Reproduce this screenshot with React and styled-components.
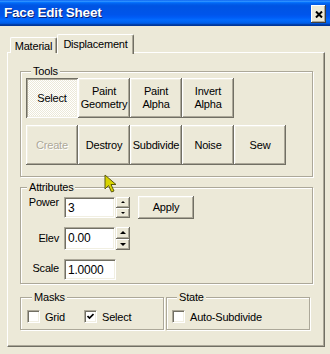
import React from "react";
import styled, { createGlobalStyle } from "styled-components";

const GlobalStyle = createGlobalStyle`
  html, body {
    margin: 0;
    padding: 0;
    background: #ece9d8;
  }
  body {
    font-family: "Liberation Sans", Arial, sans-serif;
    font-size: 11px;
    letter-spacing: -0.2px;
    color: #000;
  }
`;

//  Window frame
const Window = styled.div`
  position: relative;
  width: 330px;
  height: 354px;
  background: #ece9d8;
  display: flex;
  flex-direction: column;
  overflow: hidden;
`;

const TitleBar = styled.div`
  height: 26px;
  flex: none;
  display: flex;
  align-items: flex-start;
  justify-content: space-between;
  padding: 0 4px 0 4px;
  background: linear-gradient(
    to bottom,
    #0058ee 0%,
    #3593ff 4%,
    #288eff 6%,
    #127dff 8%,
    #036ffc 10%,
    #0262ee 14%,
    #0057e5 20%,
    #0054e3 24%,
    #0055eb 56%,
    #005bf5 66%,
    #026afe 76%,
    #0062ef 86%,
    #0052d6 92%,
    #0040ab 94%,
    #003092 100%
  );
`;

const Title = styled.span`
  color: #fff;
  font-weight: bold;
  font-size: 13.5px;
  letter-spacing: -0.2px;
  line-height: 26px;
  text-shadow: 1px 1px 0 #0a1e6e;
`;

const CloseButton = styled.div`
  width: 15px;
  height: 18px;
  margin-top: 5px;
  box-sizing: border-box;
  background: #ece9d8;
  display: flex;
  align-items: center;
  justify-content: center;
  box-shadow: inset -1px -1px #404040, inset 1px 1px #fff,
    inset -2px -2px #aca899;
`;

const Body = styled.div`
  flex: 1;
  display: flex;
  flex-direction: column;
  padding: 7px 5px 7px 7px;
`;

//  Tabs
const TabStrip = styled.div`
  height: 20px;
  display: flex;
  align-items: flex-end;
  padding-left: 3px;
`;

const Tab = styled.div`
  position: relative;
  z-index: ${p => (p.$active ? 1 : 0)};
  width: ${p => p.$width}px;
  height: ${p => (p.$active ? 20 : 16)}px;
  box-sizing: border-box;
  padding-top: ${p => (p.$active ? 3 : 2)}px;
  text-align: center;
  background: #ece9d8;
  border-top: 1px solid #fff;
  border-left: 1px solid #fff;
  border-right: 1px solid #716f64;
  border-radius: 2px 2px 0 0;
  box-shadow: inset -1px 0 #aca899;
  margin-bottom: ${p => (p.$active ? -1 : 0)}px;
`;

const TabPanel = styled.div`
  flex: 1;
  margin-top: -1px;
  display: flex;
  flex-direction: column;
  border: 1px solid;
  border-color: #fff #716f64 #716f64 #fff;
  box-shadow: inset -1px -1px #aca899;
  padding: 12px 11px 0 12px;
`;

//  Group boxes
const GroupBox = styled.fieldset`
  margin: ${p => p.$top || 0}px 0 0 0;
  min-width: 0;
  width: ${p => (p.$width ? `${p.$width}px` : "auto")};
  box-sizing: border-box;
  padding: ${p => p.$pad};
  border: 1px solid #aca899;
  box-shadow: inset 1px 1px 0 #fff, 1px 1px 0 #fff;
`;

const GroupLabel = styled.legend`
  padding: 0 2px;
  margin-left: 5px;
  line-height: 13px;
  background: #ece9d8;
`;

//  Tools buttons
const ButtonRow = styled.div`
  display: flex;
  & + & {
    margin-top: 7px;
  }
`;

const ToolButton = styled.div`
  width: 52px;
  height: 40px;
  box-sizing: border-box;
  display: flex;
  align-items: center;
  justify-content: center;
  text-align: center;
  line-height: 13px;
  color: ${p => (p.$disabled ? "#aca899" : "#000")};
  text-shadow: ${p => (p.$disabled ? "1px 1px 0 #fff" : "none")};
  background: ${p =>
    p.$pressed
      ? "repeating-conic-gradient(#fff 0 25%, #ece9d8 0 50%) 0 0 / 2px 2px"
      : "#ece9d8"};
  box-shadow: ${p =>
    p.$pressed
      ? "inset 1px 1px #716f64, inset -1px -1px #fff, inset 2px 2px #aca899, inset -2px -2px #f1efe2"
      : "inset -1px -1px #716f64, inset 1px 1px #fff, inset -2px -2px #aca899, inset 2px 2px #f1efe2"};
`;

//  Attributes rows
const FieldRow = styled.div`
  display: flex;
  align-items: flex-start;
  height: 22px;
  & + & {
    margin-top: 9px;
  }
`;

const FieldLabel = styled.span`
  width: 36px;
  margin-left: 1px;
  padding-top: ${p => p.$lift}px;
  text-align: right;
`;

const TextBox = styled.div`
  width: ${p => p.$width}px;
  height: ${p => p.$height || 21}px;
  margin-left: 5px;
  margin-top: ${p => p.$offset || 0}px;
  box-sizing: border-box;
  padding: 3px 0 0 3px;
  background: #fff;
  border: 1px solid;
  border-color: #aca899 #fff #fff #aca899;
  box-shadow: inset 1px 1px #716f64, inset -1px -1px #f1efe2;
  font-size: 12px;
`;

const Spinner = styled.div`
  width: 14px;
  height: ${p => p.$height}px;
  margin-left: 1px;
  margin-top: ${p => p.$offset || 0}px;
  display: flex;
  flex-direction: column;
`;

const SpinHalf = styled.div`
  flex: 1;
  display: flex;
  align-items: center;
  justify-content: center;
  background: #ece9d8;
  box-shadow: inset -1px -1px #716f64, inset 1px 1px #fff,
    inset -2px -2px #aca899;
`;

const Arrow = styled.div`
  width: 0;
  height: 0;
  border-left: ${p => (p.$big ? 3 : 2)}px solid transparent;
  border-right: ${p => (p.$big ? 3 : 2)}px solid transparent;
  ${p => (p.$down ? "border-top" : "border-bottom")}: ${p =>
      p.$big ? 3 : 2}px solid #000;
`;

const ApplyButton = styled(ToolButton)`
  width: 56px;
  height: 23px;
  margin-left: 8px;
`;

//  Masks / State
const BottomRow = styled.div`
  display: flex;
  gap: 2px;
  margin-top: 7px;
`;

const CheckRow = styled.div`
  display: flex;
  align-items: center;
  height: 13px;
`;

const CheckItem = styled.div`
  display: flex;
  align-items: center;
  gap: 5px;
  width: ${p => (p.$width ? `${p.$width}px` : "auto")};
`;

const CheckBox = styled.div`
  width: 13px;
  height: 13px;
  box-sizing: border-box;
  display: flex;
  align-items: center;
  justify-content: center;
  background: #fff;
  border: 1px solid;
  border-color: #aca899 #fff #fff #aca899;
  box-shadow: inset 1px 1px #716f64, inset -1px -1px #f1efe2;
`;

const Cursor = styled.svg`
  position: absolute;
  left: 104px;
  top: 174px;
`;

const Spin = ({ height, offset, big }) => (
  <Spinner $height={height} $offset={offset}>
    <SpinHalf>
      <Arrow $big={big} />
    </SpinHalf>
    <SpinHalf>
      <Arrow $big={big} $down />
    </SpinHalf>
  </Spinner>
);

const Check = ({ label, checked, width }) => (
  <CheckItem $width={width}>
    <CheckBox>
      {checked && (
        <svg width="7" height="7" viewBox="0 0 7 7">
          <path d="M0.5 3 L2.5 5 L6.5 1" fill="none" stroke="#000" strokeWidth="1.7" />
        </svg>
      )}
    </CheckBox>
    <span>{label}</span>
  </CheckItem>
);

const topTools = [
  { label: "Select", pressed: true },
  { label: "Paint Geometry" },
  { label: "Paint Alpha" },
  { label: "Invert Alpha" }
];

const bottomTools = [
  { label: "Create", disabled: true },
  { label: "Destroy" },
  { label: "Subdivide" },
  { label: "Noise" },
  { label: "Sew" }
];

const renderTool = tool => (
  <ToolButton key={tool.label} $pressed={tool.pressed} $disabled={tool.disabled}>
    {tool.label.split(" ").map((word, i) => (
      <React.Fragment key={word}>
        {i > 0 && <br />}
        {word}
      </React.Fragment>
    ))}
  </ToolButton>
);

const App = () => (
  <React.Fragment>
    <GlobalStyle />
    <Window>
      <TitleBar>
        <Title>Face Edit Sheet</Title>
        <CloseButton>
          <svg width="8" height="7" viewBox="0 0 8 7">
            <path d="M1 0.5 L7 6.5 M7 0.5 L1 6.5" stroke="#000" strokeWidth="2" />
          </svg>
        </CloseButton>
      </TitleBar>
      <Body>
        <TabStrip>
          <Tab $width={47}>Material</Tab>
          <Tab $width={77} $active>
            Displacement
          </Tab>
        </TabStrip>
        <TabPanel>
          <GroupBox $pad="0 5px 11px 5px">
            <GroupLabel>Tools</GroupLabel>
            <ButtonRow>{topTools.map(renderTool)}</ButtonRow>
            <ButtonRow>{bottomTools.map(renderTool)}</ButtonRow>
          </GroupBox>

          <GroupBox $top={4} $pad="2px 1px 3px 1px">
            <GroupLabel>Attributes</GroupLabel>
            <FieldRow>
              <FieldLabel $lift={0}>Power</FieldLabel>
              <TextBox $width={51} $offset={1}>3</TextBox>
              <Spin height={21} offset={1} />
              <ApplyButton>Apply</ApplyButton>
            </FieldRow>
            <FieldRow>
              <FieldLabel $lift={5}>Elev</FieldLabel>
              <TextBox $width={51} $height={23}>0.00</TextBox>
              <Spin height={23} big />
            </FieldRow>
            <FieldRow>
              <FieldLabel $lift={4}>Scale</FieldLabel>
              <TextBox $width={52} $offset={1}>1.0000</TextBox>
            </FieldRow>
          </GroupBox>

          <BottomRow>
            <GroupBox $width={144} $pad="6px 6px 6px 6px">
              <GroupLabel>Masks</GroupLabel>
              <CheckRow>
                <Check label="Grid" width={57} />
                <Check label="Select" checked />
              </CheckRow>
            </GroupBox>
            <GroupBox $width={144} $pad="6px 5px 6px 5px">
              <GroupLabel>State</GroupLabel>
              <CheckRow>
                <Check label="Auto-Subdivide" />
              </CheckRow>
            </GroupBox>
          </BottomRow>
        </TabPanel>
      </Body>
      <Cursor width="14" height="20" viewBox="0 0 14 20">
        <path
          d="M1 1 L1 15 L4.5 11.5 L7.5 18 L10 17 L7 10.5 L12 10.5 Z"
          fill="#d8d400"
          stroke="#5c5a10"
          strokeWidth="1"
          strokeLinejoin="round"
        />
      </Cursor>
    </Window>
  </React.Fragment>
);

export default App;
